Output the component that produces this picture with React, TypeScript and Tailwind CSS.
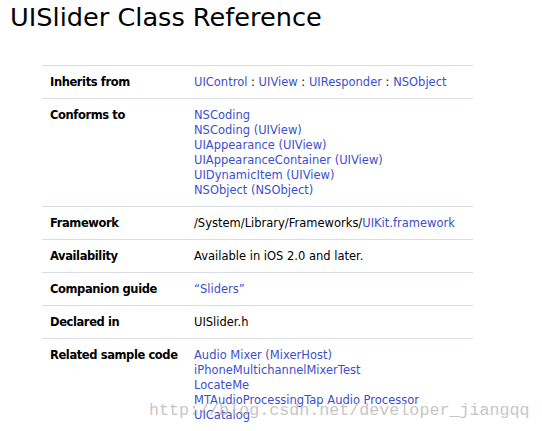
import React from "react";

const link = "text-[#3c4fcd]";

type Row = { label: string; values: React.ReactNode[] };

const rows: Row[] = [
  {
    label: "Inherits from",
    values: [
      <span>
        <span className={link}>UIControl</span> : <span className={link}>UIView</span> :{" "}
        <span className={link}>UIResponder</span> : <span className={link}>NSObject</span>
      </span>,
    ],
  },
  {
    label: "Conforms to",
    values: [
      "NSCoding",
      "NSCoding (UIView)",
      "UIAppearance (UIView)",
      "UIAppearanceContainer (UIView)",
      "UIDynamicItem (UIView)",
      "NSObject (NSObject)",
    ].map((t) => <span className={link}>{t}</span>),
  },
  {
    label: "Framework",
    values: [
      <span>
        /System/Library/Frameworks/<span className={link}>UIKit.framework</span>
      </span>,
    ],
  },
  { label: "Availability", values: ["Available in iOS 2.0 and later."] },
  { label: "Companion guide", values: [<span className={link}>“Sliders”</span>] },
  { label: "Declared in", values: ["UISlider.h"] },
  {
    label: "Related sample code",
    values: [
      "Audio Mixer (MixerHost)",
      "iPhoneMultichannelMixerTest",
      "LocateMe",
      "MTAudioProcessingTap Audio Processor",
      "UICatalog",
    ].map((t) => <span className={link}>{t}</span>),
  },
];

export default function App() {
  return (
    <div className="relative h-[431px] w-[542px] overflow-hidden bg-white font-['DejaVu_Sans',sans-serif] text-black">
      <h1 className="pl-[10px] text-[25.6px] leading-[34px]">UISlider Class Reference</h1>
      <div className="ml-[42px] mt-[31px] w-[431px] border-t border-[#d8dde3]">
        {rows.map((r) => (
          <div key={r.label} className="grid grid-cols-[152px_1fr] border-b border-[#d8dde3] pt-[9px] pb-[8px] text-[11.5px] leading-[15px]">
            <div className="pl-[8px] font-bold tracking-[-0.4px]">{r.label}</div>
            <div className="flex flex-col">
              {r.values.map((v, i) => (
                <div key={i}>{v}</div>
              ))}
            </div>
          </div>
        ))}
      </div>
      {/* watermark over the last rows, as in the screenshot */}
      <div className="pointer-events-none absolute left-[149px] top-[398px] font-['Liberation_Mono',monospace] text-[16.7px] text-[#b9b9b9] opacity-80">
        http://blog.csdn.net/developer_jiangqq
      </div>
    </div>
  );
}
